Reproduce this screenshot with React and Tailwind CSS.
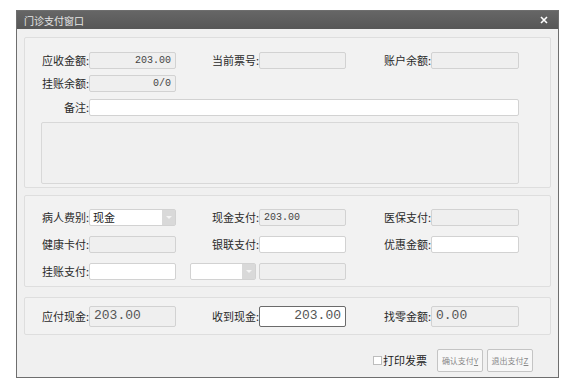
import React from "react";

const font = { fontFamily: '"Noto Sans CJK SC", "Noto Sans", sans-serif' };

function Label({ w, children, big }) {
  return (
    <div
      className={`flex shrink-0 items-center justify-end text-[11px] text-[#2a2a2a] ${w}`}
    >
      {children}
    </div>
  );
}

function Field({ w, gray, right, big, dark, children }) {
  return (
    <div
      className={`flex h-[17px] shrink-0 items-center rounded-[2px] border px-[4px] ${w} ${
        gray ? "bg-[#efefef]" : "bg-white"
      } ${dark ? "border-[#6b6b6b]" : "border-[#d2d2d2]"} ${
        right ? "justify-end" : "justify-start"
      } ${big ? "text-[13px] text-[#555]" : "text-[10px] text-[#444]"}`}
      style={{ fontFamily: '"Liberation Mono", "Noto Sans CJK SC", monospace' }}
    >
      {children}
    </div>
  );
}

function Select({ w, children }) {
  return (
    <div
      className={`flex h-[17px] shrink-0 items-center justify-between rounded-[2px] border border-[#d2d2d2] bg-white pl-[3px] ${w}`}
    >
      <span className="text-[11px] text-[#222]">{children}</span>
      <div className="flex h-full w-[13px] items-center justify-center bg-[#d9d9d9]">
        <svg width="6" height="4" viewBox="0 0 6 4">
          <path d="M0 0 L6 0 L3 3 Z" fill="#f4f4f4" />
        </svg>
      </div>
    </div>
  );
}

export default function App() {
  return (
    <div className="h-[389px] w-[576px] bg-white pl-[16px] pt-[10px]" style={font}>
      <div className="flex h-[368px] w-[543px] flex-col border border-[#6e6e6e] bg-[#f0f0f0]">
        {/* title bar */}
        <div className="flex h-[18px] shrink-0 items-center justify-between bg-gradient-to-b from-[#666] to-[#575757] pl-[7px] pr-[10px]">
          <span className="text-[10px] text-[#e6e6e6]">门诊支付窗口</span>
          <svg width="8" height="8" viewBox="0 0 8 8">
            <path d="M1 1 L7 7 M7 1 L1 7" stroke="#fff" strokeWidth="1.6" />
          </svg>
        </div>

        <div className="flex flex-1 flex-col px-[7px] pt-[8px]">
          {/* section 1 */}
          <div className="flex h-[151px] flex-col rounded-[2px] border border-[#dedede] bg-[#f2f2f2] pt-[14px]">
            <div className="flex h-[17px] items-center">
              <Label w="w-[64px]">应收金额:</Label>
              <Field w="w-[87px]" gray right>203.00</Field>
              <Label w="w-[83px]">当前票号:</Label>
              <Field w="w-[87px]" gray></Field>
              <Label w="w-[85px]">账户余额:</Label>
              <Field w="w-[88px]" gray></Field>
            </div>
            <div className="mt-[6px] flex h-[17px] items-center">
              <Label w="w-[64px]">挂账余额:</Label>
              <Field w="w-[87px]" gray right>0/0</Field>
            </div>
            <div className="mt-[7px] flex h-[17px] items-center">
              <Label w="w-[64px]">备注:</Label>
              <Field w="w-[430px]"></Field>
            </div>
            <div className="ml-[16px] mt-[6px] h-[62px] w-[478px] rounded-[2px] border border-[#d8d8d8] bg-[#f0f0f0]"></div>
          </div>

          {/* section 2 */}
          <div className="mt-[7px] flex h-[92px] flex-col rounded-[2px] border border-[#dedede] bg-[#f2f2f2] pt-[13px]">
            <div className="flex h-[17px] items-center">
              <Label w="w-[64px]">病人费别:</Label>
              <Select w="w-[87px]">现金</Select>
              <Label w="w-[83px]">现金支付:</Label>
              <Field w="w-[87px]" gray>203.00</Field>
              <Label w="w-[85px]">医保支付:</Label>
              <Field w="w-[88px]" gray></Field>
            </div>
            <div className="mt-[10px] flex h-[17px] items-center">
              <Label w="w-[64px]">健康卡付:</Label>
              <Field w="w-[87px]" gray></Field>
              <Label w="w-[83px]">银联支付:</Label>
              <Field w="w-[87px]"></Field>
              <Label w="w-[85px]">优惠金额:</Label>
              <Field w="w-[88px]"></Field>
            </div>
            <div className="mt-[10px] flex h-[17px] items-center">
              <Label w="w-[64px]">挂账支付:</Label>
              <Field w="w-[87px]"></Field>
              <div className="w-[14px] shrink-0"></div>
              <Select w="w-[66px]"></Select>
              <div className="w-[3px] shrink-0"></div>
              <Field w="w-[87px]" gray></Field>
            </div>
          </div>

          {/* section 3 */}
          <div className="mt-[10px] flex h-[38px] items-center rounded-[2px] border border-[#dedede] bg-[#f2f2f2]">
            <Label w="w-[64px]">应付现金:</Label>
            <Field w="w-[87px] !h-[21px]" gray big>203.00</Field>
            <Label w="w-[83px]">收到现金:</Label>
            <Field w="w-[87px] !h-[21px]" big right dark>203.00</Field>
            <Label w="w-[85px]">找零金额:</Label>
            <Field w="w-[88px] !h-[21px]" gray big>0.00</Field>
          </div>

          {/* bottom buttons */}
          <div className="mt-[14px] flex items-center justify-end pr-[18px]">
            <div className="flex items-center">
              <div className="h-[9px] w-[9px] border border-[#bdbdbd] bg-white"></div>
              <span className="ml-[1px] text-[11px] text-[#222]">打印发票</span>
            </div>
            <button className="ml-[10px] flex h-[23px] w-[46px] items-center justify-center rounded-[2px] border border-[#c4c4c4] bg-[#f7f7f7] text-[8px] text-[#888]">
              确认支付<u>Y</u>
            </button>
            <button className="ml-[4px] flex h-[23px] w-[46px] items-center justify-center rounded-[2px] border border-[#c4c4c4] bg-[#f7f7f7] text-[8px] text-[#888]">
              退出支付<u>Z</u>
            </button>
          </div>
        </div>
      </div>
    </div>
  );
}
